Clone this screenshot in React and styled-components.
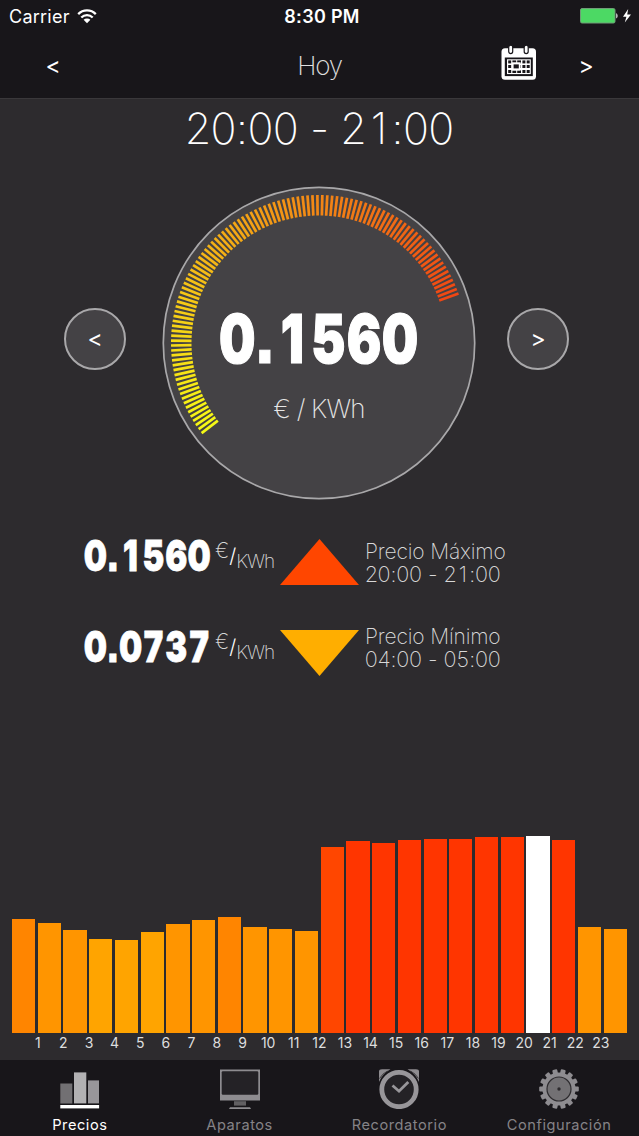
import React, { useState } from "react";
import styled, { createGlobalStyle } from "styled-components";

const GlobalStyle = createGlobalStyle`
  html,
  body {
    margin: 0;
    padding: 0;
    background: #2d2b2e;
  }
  * {
    box-sizing: border-box;
  }
`;

const Screen = styled.div`
  display: flex;
  flex-direction: column;
  width: 639px;
  height: 1136px;
  overflow: hidden;
  background: #2d2b2e;
  color: #fff;
  font-family: Inter, "Liberation Sans", sans-serif;
  font-feature-settings: "ss07";
`;

const Header = styled.header`
  height: 99px;
  background: #18161a;
  border-bottom: 1px solid #3a383b;
`;

const StatusBar = styled.div`
  display: grid;
  grid-template-columns: 1fr auto 1fr;
  align-items: center;
  height: 32px;
  padding: 0 6px 0 9px;
  font-size: 18px;
`;

const Carrier = styled.div`
  display: flex;
  align-items: center;
  gap: 7px;
  letter-spacing: 0.25px;
`;

const Clock = styled.div`
  padding-left: 2px;
  font-weight: 600;
  letter-spacing: 0.3px;
`;

const Battery = styled.div`
  display: flex;
  justify-content: flex-end;
`;

const NavBar = styled.nav`
  display: grid;
  grid-template-columns: 106px 1fr 106px;
  align-items: center;
  height: 66px;
`;

const NavTitle = styled.div`
  display: grid;
  grid-template-columns: 1fr auto 1fr;
  align-items: center;
`;

const NavText = styled.h1`
  grid-column: 2;
  margin: 0;
  color: #e0e0e0;
  font-size: 26px;
  font-weight: 160;
  letter-spacing: -1.3px;
`;

const IconButton = styled.button`
  justify-self: end;
  display: flex;
  padding: 0;
  margin: -4px -4px 0 0;
  border: 0;
  background: none;
`;

const ArrowButton = styled.button`
  padding: 1px 0 0;
  border: 0;
  background: none;
  color: #fff;
  font: 400 23px Inter, sans-serif;
`;

const RoundButton = styled(ArrowButton)`
  width: 62px;
  height: 62px;
  margin-bottom: 9px;
  border: 2px solid #a9a8aa;
  border-radius: 50%;
  background: #444245;
`;

const HourRange = styled.h2`
  margin: 0;
  height: 87px;
  padding-top: 2px;
  text-align: center;
  font-size: 43px;
  line-height: 54px;
  font-weight: 160;
  letter-spacing: -0.3px;
`;

const GaugeRow = styled.section`
  display: flex;
  align-items: center;
  justify-content: space-between;
  height: 314px;
  padding: 0 70px 0 64px;
`;

const Gauge = styled.div`
  display: grid;
  width: 314px;
  height: 314px;
  margin-left: 5px;

  > * {
    grid-area: 1 / 1;
  }
`;

const Reading = styled.div`
  display: flex;
  flex-direction: column;
  align-items: center;
  padding-top: 111px;
`;

const Digit = styled.span`
  display: inline-flex;
  justify-content: center;
  width: ${p => p.$width}em;
`;

const Price = styled.div`
  width: max-content;
  font-size: ${p => p.$size}px;
  line-height: ${p => p.$line}px;
  font-weight: 900;
  white-space: nowrap;
  -webkit-text-stroke: ${p => p.$size / 55}px #fff;
  transform: scaleX(${p => p.$squeeze});
  transform-origin: ${p => p.$origin || "center"};
`;

const GaugeUnit = styled.div`
  margin-top: 13px;
  color: #e6e6e6;
  font-size: 26px;
  line-height: 34px;
  font-weight: 160;
  letter-spacing: -0.8px;
`;

const Stats = styled.section`
  display: flex;
  flex-direction: column;
  gap: 45px;
  height: 335px;
  padding: 39px 0 0 84px;
`;

const Stat = styled.div`
  display: grid;
  grid-template-columns: 131px 65px 79px 1fr;
  height: 46px;
`;

const StatUnit = styled.div`
  display: flex;
  color: #d6d6d6;
  font-size: 20px;
  line-height: 24px;
  font-weight: 160;
`;

const Currency = styled.span`
  font-size: 21px;
`;

const Slash = styled.span`
  padding-top: 5px;
  color: #fff;
  font-weight: 300;
`;

const PerHour = styled.span`
  padding-top: 11px;
  font-size: 19px;
  letter-spacing: -1px;
`;

const StatText = styled.div`
  padding-left: 6px;
  margin-top: ${p => p.$shift}px;
  color: #d8d8d8;
  font-size: 21px;
  line-height: 23px;
  font-weight: 160;
  letter-spacing: -0.15px;
  white-space: nowrap;
`;

const StatHours = styled.div`
  font-size: 21.6px;
  letter-spacing: 0;
`;

const Chart = styled.section`
  display: flex;
  align-items: flex-end;
  justify-content: space-between;
  height: 198px;
  padding: 0 12px;
`;

const Bar = styled.div`
  width: 23.2px;
  height: ${p => p.$height}px;
  background: ${p => p.$color};
`;

const Hours = styled.div`
  display: flex;
  height: 27px;
  padding: 1px 0 0 25px;
  color: #dedede;
  font-size: 14px;
  line-height: 18px;
`;

const Hour = styled.span`
  width: 25.6px;
  flex: none;
  text-align: center;
`;

const TabBar = styled.nav`
  display: flex;
  flex: 1;
  background: #18161a;
`;

const Tab = styled.button`
  display: flex;
  flex: 1 1 0;
  flex-direction: column;
  align-items: center;
  padding: 9px 0 0;
  border: 0;
  background: none;
  color: ${p => (p.$active ? "#fff" : "#858387")};
  font: 400 14.6px/18px Inter, sans-serif;
  letter-spacing: 0.55px;

  svg {
    display: block;
    margin-bottom: 7px;
  }
`;

const BARS = [
  [114, "#ff8500"],
  [110, "#ff9500"],
  [103.5, "#ff9500"],
  [94, "#ffa400"],
  [93, "#ffa400"],
  [101, "#ffa400"],
  [109, "#ff9500"],
  [113, "#ff9500"],
  [116, "#ff8500"],
  [106, "#ff9500"],
  [104, "#ff9500"],
  [102.5, "#ff9500"],
  [186, "#ff4600"],
  [192, "#ff3500"],
  [190.5, "#ff3500"],
  [193, "#ff3500"],
  [194.5, "#ff3500"],
  [194.5, "#ff3500"],
  [195.6, "#ff3500"],
  [195.6, "#ff3500"],
  [197, "#ffffff"],
  [193.5, "#ff3500"],
  [106.5, "#ff9500"],
  [104, "#ff9500"]
];

const WifiIcon = () => (
  <svg width="20" height="15" viewBox="0 0 20 15">
    <g fill="none" stroke="#fff" strokeWidth="2.3">
      <path d="M1.2 5.1a12.3 12.3 0 0 1 17.6 0" />
      <path d="M4.3 8.5a8 8 0 0 1 11.4 0" />
    </g>
    <path d="M6.6 10.8a4.8 4.8 0 0 1 6.8 0L10 14.3z" fill="#fff" />
  </svg>
);

const BatteryIcon = () => (
  <svg width="53" height="16" viewBox="0 0 53 16">
    <rect x="0.5" y="0.5" width="34.5" height="14.5" rx="1.5" fill="#4cd964" stroke="#6f9c77" />
    <path d="M36.3 5.2c1.6.4 1.6 4.7 0 5.2z" fill="#fff" />
    <path d="M48.2 1 43 8.8h3.4L44.8 14.6 51 6.6h-3.8z" fill="#fff" />
  </svg>
);

const CalendarIcon = () => (
  <svg width="36" height="36" viewBox="0 0 36 36">
    <rect x="0.5" y="3.3" width="34.5" height="31.5" rx="3.5" fill="#fff" />
    <rect x="3.8" y="12.5" width="28" height="18.6" fill="#18161a" />
    {[7.7, 23.2].map(x => (
      <rect key={x} x={x} y="0.2" width="4" height="8.4" rx="2" fill="#fff" stroke="#18161a" strokeWidth="1.2" />
    ))}
    <rect x="6" y="14.3" width="23.8" height="14.8" fill="#fff" />
    <g fill="#18161a">
      {[15.4, 20, 25].map(y =>
        [7.2, 11.4, 16.2, 21.4, 25.7].map(x => (
          <rect key={x + "-" + y} x={x} y={y} width={x === 11.4 || x === 16.2 ? 3.8 : 3} height="3" />
        ))
      )}
    </g>
    <rect x="10.8" y="17.3" width="8.8" height="8.4" fill="#fff" />
    <rect x="12.6" y="19.4" width="5.2" height="4" fill="#18161a" />
  </svg>
);

const PricesIcon = () => (
  <svg width="40" height="40" viewBox="0 0 40 40">
    <rect x="0.3" y="14.5" width="12" height="20" fill="#727073" />
    <rect x="14" y="3.4" width="12.3" height="31" fill="#b2b1b3" />
    <rect x="28" y="11.4" width="11" height="23" fill="#98969a" />
    <rect x="0.3" y="36" width="38.8" height="3.4" fill="#fff" />
  </svg>
);

const DevicesIcon = () => (
  <svg width="40" height="40" viewBox="0 0 40 40">
    <path d="M0 .5h40v31H0z" fill="#8e8c90" />
    <rect x="1.7" y="2.3" width="36.6" height="23.4" rx="1.2" fill="#242226" />
    <rect x="14" y="32.2" width="12" height="4.4" fill="#626063" />
    <path d="M9 40l1-1.8h20l1 1.8z" fill="#8e8c90" />
  </svg>
);

const AlarmIcon = () => (
  <svg width="40" height="40" viewBox="0 0 40 40">
    <path d="M0 13V2.5Q0 .2 3 .2h8.5A25 25 0 0 0 0 13zM40 13V2.5Q40 .2 37 .2h-8.5A25 25 0 0 1 40 13z" fill="#8e8c90" />
    <path d="M.5 9.5A20 20 0 0 1 8.5 2M39.5 9.5A20 20 0 0 0 31.5 2" fill="none" stroke="#3a383b" strokeWidth="1" />
    <circle cx="20" cy="20.5" r="17.2" fill="#242226" stroke="#98969a" strokeWidth="4.8" />
    <path d="M13.5 16.5l6.5 5.7L29.3 13" fill="none" stroke="#98969a" strokeWidth="2.8" />
  </svg>
);

const SettingsIcon = () => (
  <svg width="40" height="40" viewBox="0 0 40 40">
    {[...Array(14)].map((_, i) => (
      <rect
        key={i}
        x="17.5"
        y="0.2"
        width="5"
        height="7"
        rx="1"
        fill="#8e8c90"
        transform={`rotate(${(i + 0.5) * (360 / 14)} 20 20)`}
      />
    ))}
    <circle cx="20" cy="20" r="16.6" fill="#8e8c90" />
    <circle cx="20" cy="20" r="12" fill="#737174" stroke="#2d2b2e" strokeWidth="1.2" />
    <circle cx="20" cy="20" r="1.7" fill="#2d2b2e" />
  </svg>
);

const TABS = [
  ["Precios", PricesIcon],
  ["Aparatos", DevicesIcon],
  ["Recordatorio", AlarmIcon],
  ["Configuración", SettingsIcon]
];

const TICKS = 104;

// yellow at the cheap end, red at the expensive one
const tickColor = t => `hsl(${61 - 47 * t}, ${94 - 6 * t}%, ${53 - 2 * t}%)`;

const Dial = () => (
  <svg width="314" height="314" viewBox="0 0 314 314">
    <circle cx="157" cy="157" r="155.7" fill="#444245" stroke="#a9a8aa" strokeWidth="1.7" />
    {[...Array(TICKS)].map((_, i) => {
      const t = i / (TICKS - 1);
      return (
        <line
          key={i}
          x1="284.5"
          y1="157"
          x2="305"
          y2="157"
          stroke={tickColor(t)}
          strokeWidth="2.7"
          transform={`rotate(${142.5 + 198 * t} 157 157)`}
        />
      );
    })}
  </svg>
);

// every digit gets the same width, ":" "." and spaces keep their own
const Figures = ({ text, width = 0.59 }) =>
  text.split(/(\d)/).map((part, i) =>
    /\d/.test(part) ? (
      <Digit key={i} $width={width}>
        {part}
      </Digit>
    ) : (
      part
    )
  );

const StatRow = ({ price, label, hours, points, color, shift }) => (
  <Stat>
    <Price $size={43} $line={33} $squeeze={0.76} $origin="left">
      <Figures text={price} width={0.7} />
    </Price>
    <StatUnit>
      <Currency>€</Currency>
      <Slash>/</Slash>
      <PerHour>KWh</PerHour>
    </StatUnit>
    <svg width="79" height="46" viewBox="0 0 79 46">
      <polygon points={points} fill={color} />
    </svg>
    <StatText $shift={shift}>
      {label}
      <StatHours>
        <Figures text={hours} />
      </StatHours>
    </StatText>
  </Stat>
);

const App = () => {
  const [tab, setTab] = useState("Precios");

  return (
    <Screen>
      <GlobalStyle />
      <Header>
        <StatusBar>
          <Carrier>
            Carrier <WifiIcon />
          </Carrier>
          <Clock>8:30 PM</Clock>
          <Battery>
            <BatteryIcon />
          </Battery>
        </StatusBar>
        <NavBar>
          <ArrowButton>&lt;</ArrowButton>
          <NavTitle>
            <NavText>Hoy</NavText>
            <IconButton>
              <CalendarIcon />
            </IconButton>
          </NavTitle>
          <ArrowButton>&gt;</ArrowButton>
        </NavBar>
      </Header>

      <HourRange>
        <Figures text="20:00 - 21:00" />
      </HourRange>

      <GaugeRow>
        <RoundButton>&lt;</RoundButton>
        <Gauge>
          <Dial />
          <Reading>
            <Price $size={68} $line={82} $squeeze={0.755}>
              <Figures text="0.1560" width={0.7} />
            </Price>
            <GaugeUnit>€ / KWh</GaugeUnit>
          </Reading>
        </Gauge>
        <RoundButton>&gt;</RoundButton>
      </GaugeRow>

      <Stats>
        <StatRow
          price="0.1560"
          label="Precio Máximo"
          hours="20:00 - 21:00"
          points="39.5,0 79,46 0,46"
          color="#ff4600"
          shift={1}
        />
        <StatRow
          price="0.0737"
          label="Precio Mínimo"
          hours="04:00 - 05:00"
          points="0,0 79,0 39.5,46"
          color="#ffae00"
          shift={-5}
        />
      </Stats>

      <Chart>
        {BARS.map(([height, color], i) => (
          <Bar key={i} $height={height} $color={color} />
        ))}
      </Chart>
      <Hours>
        {BARS.slice(1).map((_, i) => (
          <Hour key={i}>{i + 1}</Hour>
        ))}
      </Hours>

      <TabBar>
        {TABS.map(([name, Icon]) => (
          <Tab key={name} $active={tab === name} onClick={() => setTab(name)}>
            <Icon />
            {name}
          </Tab>
        ))}
      </TabBar>
    </Screen>
  );
};

export default App;
